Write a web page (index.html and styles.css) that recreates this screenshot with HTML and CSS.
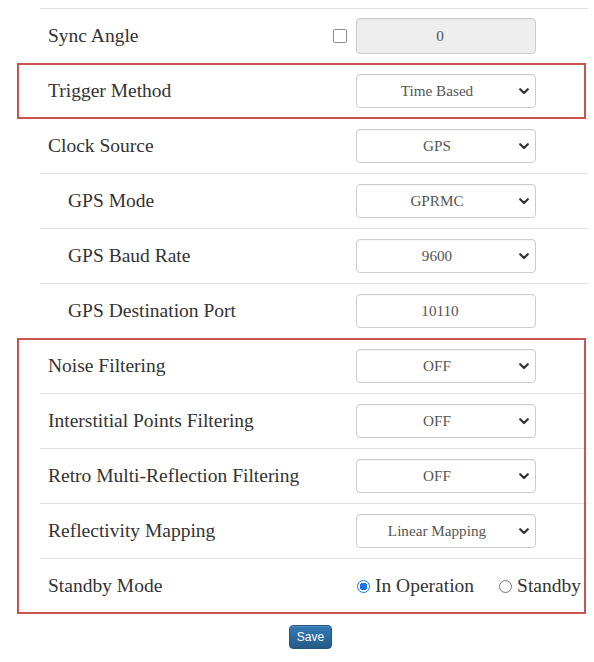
FILE: index.html
```html
<!DOCTYPE html>
<html>
<head>
<meta charset="utf-8">
<link rel="stylesheet" href="styles.css">
</head>
<body>
<div class="page">
  <div class="table">
    <div class="row">
      <div class="label">Sync Angle</div>
      <div class="check-cell"><span class="checkbox"></span></div>
      <div class="control"><div class="input disabled">0</div></div>
    </div>
    <div class="group">
      <div class="row">
        <div class="label">Trigger Method</div>
        <div class="control"><div class="select"><span class="val">Time Based</span><svg class="chev" width="10" height="7" viewBox="0 0 10 7"><path d="M1.2 1.2 L5 5 L8.8 1.2" fill="none" stroke="#333" stroke-width="2.2" stroke-linecap="round" stroke-linejoin="round"/></svg></div></div>
      </div>
    </div>
    <div class="row">
      <div class="label">Clock Source</div>
      <div class="control"><div class="select"><span class="val">GPS</span><svg class="chev" width="10" height="7" viewBox="0 0 10 7"><path d="M1.2 1.2 L5 5 L8.8 1.2" fill="none" stroke="#333" stroke-width="2.2" stroke-linecap="round" stroke-linejoin="round"/></svg></div></div>
    </div>
    <div class="row">
      <div class="label sub">GPS Mode</div>
      <div class="control"><div class="select"><span class="val">GPRMC</span><svg class="chev" width="10" height="7" viewBox="0 0 10 7"><path d="M1.2 1.2 L5 5 L8.8 1.2" fill="none" stroke="#333" stroke-width="2.2" stroke-linecap="round" stroke-linejoin="round"/></svg></div></div>
    </div>
    <div class="row">
      <div class="label sub">GPS Baud Rate</div>
      <div class="control"><div class="select"><span class="val">9600</span><svg class="chev" width="10" height="7" viewBox="0 0 10 7"><path d="M1.2 1.2 L5 5 L8.8 1.2" fill="none" stroke="#333" stroke-width="2.2" stroke-linecap="round" stroke-linejoin="round"/></svg></div></div>
    </div>
    <div class="row">
      <div class="label sub">GPS Destination Port</div>
      <div class="control"><div class="input">10110</div></div>
    </div>
    <div class="group">
      <div class="row">
        <div class="label">Noise Filtering</div>
        <div class="control"><div class="select"><span class="val">OFF</span><svg class="chev" width="10" height="7" viewBox="0 0 10 7"><path d="M1.2 1.2 L5 5 L8.8 1.2" fill="none" stroke="#333" stroke-width="2.2" stroke-linecap="round" stroke-linejoin="round"/></svg></div></div>
      </div>
      <div class="row">
        <div class="label">Interstitial Points Filtering</div>
        <div class="control"><div class="select"><span class="val">OFF</span><svg class="chev" width="10" height="7" viewBox="0 0 10 7"><path d="M1.2 1.2 L5 5 L8.8 1.2" fill="none" stroke="#333" stroke-width="2.2" stroke-linecap="round" stroke-linejoin="round"/></svg></div></div>
      </div>
      <div class="row">
        <div class="label">Retro Multi-Reflection Filtering</div>
        <div class="control"><div class="select"><span class="val">OFF</span><svg class="chev" width="10" height="7" viewBox="0 0 10 7"><path d="M1.2 1.2 L5 5 L8.8 1.2" fill="none" stroke="#333" stroke-width="2.2" stroke-linecap="round" stroke-linejoin="round"/></svg></div></div>
      </div>
      <div class="row">
        <div class="label">Reflectivity Mapping</div>
        <div class="control"><div class="select"><span class="val">Linear Mapping</span><svg class="chev" width="10" height="7" viewBox="0 0 10 7"><path d="M1.2 1.2 L5 5 L8.8 1.2" fill="none" stroke="#333" stroke-width="2.2" stroke-linecap="round" stroke-linejoin="round"/></svg></div></div>
      </div>
      <div class="row">
        <div class="label">Standby Mode</div>
        <div class="radios">
          <span class="opt"><span class="radio checked"></span>In Operation</span>
          <span class="opt"><span class="radio"></span>Standby</span>
        </div>
      </div>
    </div>
  </div>
  <div class="footer"><button class="btn">Save</button></div>
</div>
</body>
</html>
```

FILE: styles.css
```css
html, body {
  margin: 0;
  padding: 0;
  background: #fff;
}
.page {
  padding-top: 8px;
  font-family: "Liberation Serif", "Times New Roman", serif;
  color: #333;
}
.table {
  margin-left: 40px;
  width: 548px;
}
.group {
  position: relative;
}
.group::after {
  content: "";
  position: absolute;
  top: 0;
  bottom: -1px;
  left: -23px;
  right: 2px;
  border: 2px solid #c95450;
  pointer-events: none;
}
.row {
  display: grid;
  grid-template-columns: 1fr 23px 180px 52px;
  align-items: center;
  height: 55px;
  box-sizing: border-box;
  border-top: 1px solid #e2e2e2;
}
.label {
  grid-column: 1;
  padding-left: 8px;
  font-size: 19.5px;
  white-space: nowrap;
}
.label.sub {
  padding-left: 28px;
}
.check-cell {
  grid-column: 2;
  display: flex;
  align-items: center;
}
.checkbox {
  width: 12px;
  height: 12px;
  border: 1.5px solid #8c8c8c;
  border-radius: 2px;
  box-sizing: content-box;
}
.control {
  grid-column: 3;
}
.select, .input {
  height: 34px;
  box-sizing: border-box;
  border: 1px solid #ccc;
  border-radius: 4px;
  background: #fff;
  font-size: 15.2px;
  color: #555;
  display: flex;
  align-items: center;
  box-shadow: inset 0 1px 1px rgba(0,0,0,0.04);
}
.select .val {
  flex: 1;
  text-align: center;
  padding-left: 2px;
}
.select .chev {
  margin-right: 6px;
  margin-left: 4px;
  flex: none;
}
.input {
  justify-content: center;
  padding-right: 12px;
}
.input.disabled {
  background: #eee;
  height: 36px;
}
.radios {
  grid-column: 3 / 5;
  display: flex;
  align-items: center;
  font-size: 19.5px;
  white-space: nowrap;
}
.opt {
  display: inline-flex;
  align-items: center;
  margin-right: 24px;
}
.opt:last-child {
  margin-right: 0;
}
.radio {
  width: 13px;
  height: 13px;
  box-sizing: border-box;
  border: 1px solid #767676;
  border-radius: 50%;
  margin-left: 1px;
  margin-right: 5px;
  background: #fff;
}
.radio.checked {
  border: 1.5px solid #1a73e8;
  background: radial-gradient(circle, #1a73e8 0 3.6px, #fff 4px);
}
.footer {
  display: flex;
  justify-content: center;
  width: 555px;
  margin-left: 33px;
  margin-top: 12px;
}
.btn {
  width: 43px;
  height: 24px;
  padding: 0;
  border: 1px solid #245580;
  border-radius: 4px;
  background: linear-gradient(to bottom, #337ab7 0%, #265a88 100%);
  color: #fff;
  font-family: "Liberation Sans", Arial, sans-serif;
  font-size: 12px;
  box-shadow: inset 0 1px 0 rgba(255,255,255,0.15), 0 1px 1px rgba(0,0,0,0.075);
}
```
